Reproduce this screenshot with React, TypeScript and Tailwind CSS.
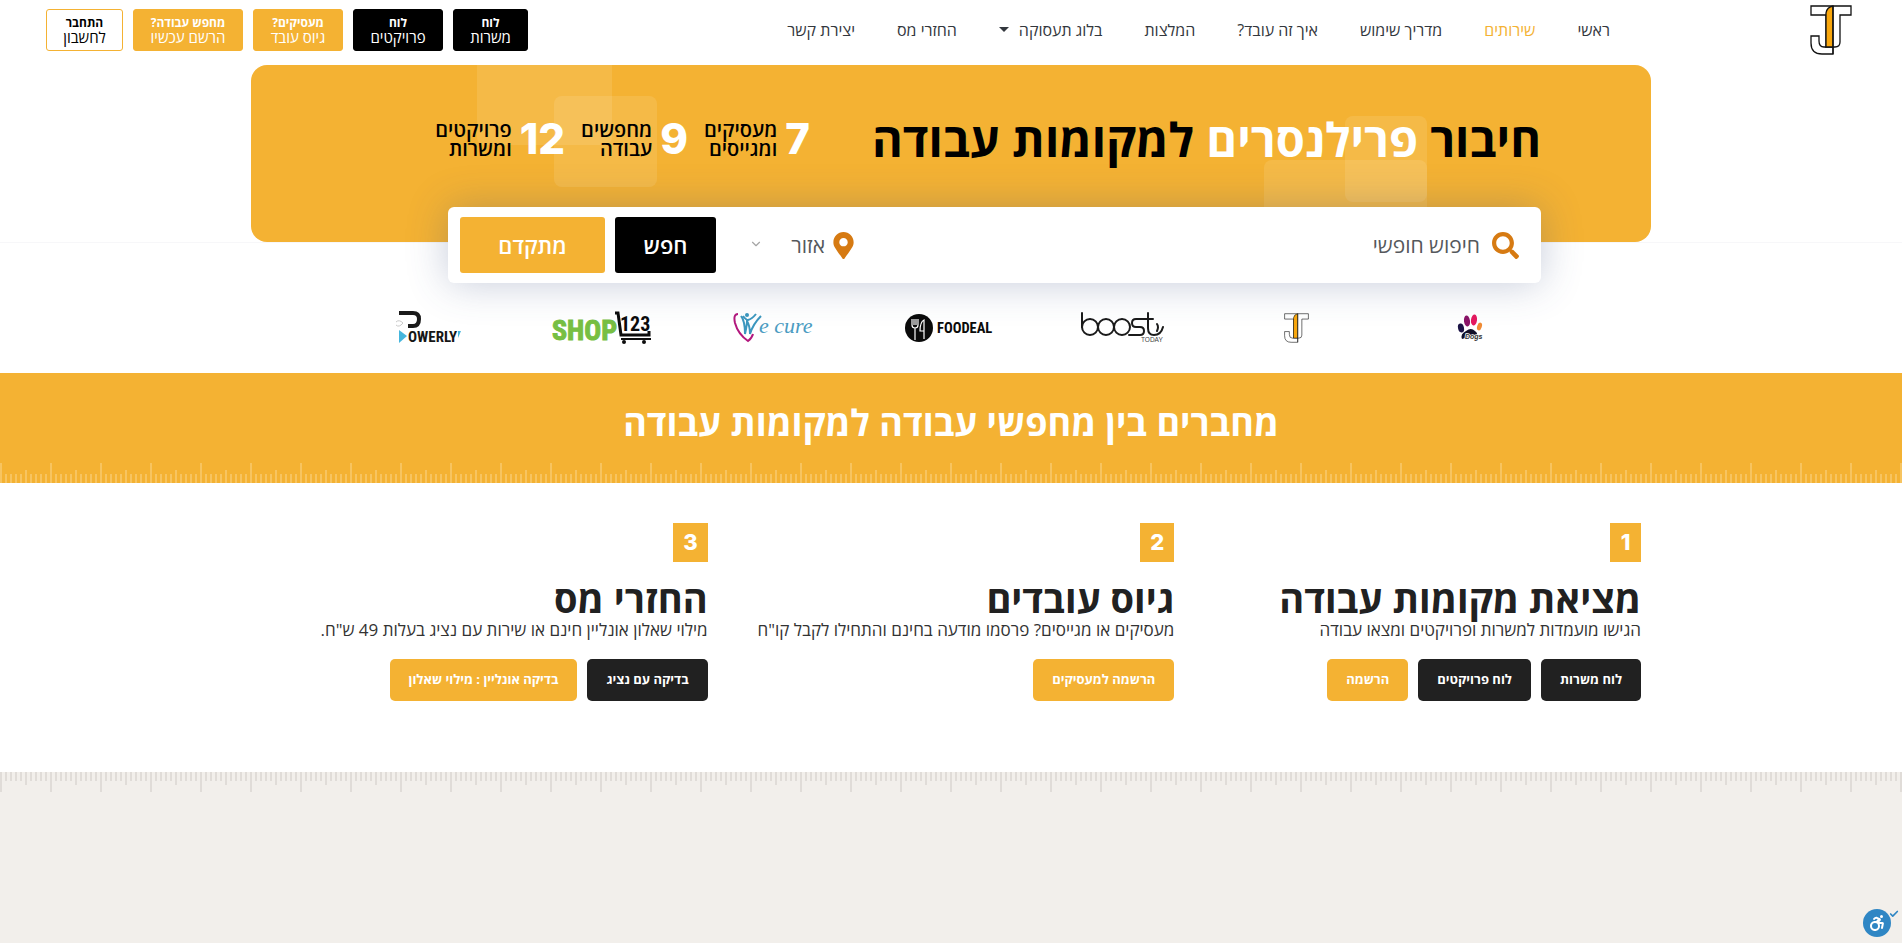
import React from 'react';
import { FaMapMarkerAlt, FaSearch } from 'react-icons/fa';
import { FaWheelchairMove } from 'react-icons/fa6';
import { Check, ChevronDown } from 'lucide-react';

interface NavItem {
  label: string;
  active?: boolean;
  hasMenu?: boolean;
}

interface Action {
  label: string;
  className: string;
}

const navItems: NavItem[] = [
  { label: 'ראשי' },
  { label: 'שירותים', active: true },
  { label: 'מדריך שימוש' },
  { label: 'איך זה עובד?' },
  { label: 'המלצות' },
  { label: 'בלוג תעסוקה', hasMenu: true },
  { label: 'החזרי מס' },
  { label: 'יצירת קשר' },
];

const headerButtons = [
  { top: 'לוח', bottom: 'משרות', className: 'w-[75px] bg-black border-black text-white' },
  { top: 'לוח', bottom: 'פרויקטים', className: 'w-[90px] bg-black border-black text-white' },
  { top: 'מעסיקים?', bottom: 'גיוס עובד', className: 'w-[90px] bg-[#f4b233] border-[#f4b233] text-white' },
  { top: 'מחפש עבודה?', bottom: 'הרשם עכשיו', className: 'w-[110px] bg-[#f4b233] border-[#f4b233] text-white' },
  { top: 'התחבר', bottom: 'לחשבון', className: 'w-[77px] bg-white border-[#f4b233] text-black' },
];

const stats = [
  { value: 7, first: 'מעסיקים', second: 'ומגייסים' },
  { value: 9, first: 'מחפשים', second: 'עבודה' },
  { value: 12, first: 'פרויקטים', second: 'ומשרות' },
];

const dark = 'bg-[#212121]';
const gold = 'bg-[#f4b233]';

const services: { title: string; text: string; actions: Action[] }[] = [
  {
    title: 'מציאת מקומות עבודה',
    text: 'הגישו מועמדות למשרות ופרויקטים ומצאו עבודה',
    actions: [
      { label: 'לוח משרות', className: dark },
      { label: 'לוח פרויקטים', className: dark },
      { label: 'הרשמה', className: gold },
    ],
  },
  {
    title: 'גיוס עובדים',
    text: 'מעסיקים או מגייסים? פרסמו מודעה בחינם והתחילו לקבל קו"ח',
    actions: [{ label: 'הרשמה למעסיקים', className: gold }],
  },
  {
    title: 'החזרי מס',
    text: 'מילוי שאלון אונליין חינם או שירות עם נציג בעלות 49 ש"ח.',
    actions: [
      { label: 'בדיקה עם נציג', className: dark },
      { label: 'בדיקה אונליין : מילוי שאלון', className: gold },
    ],
  },
];

function JTLogo({ className, thin }: { className: string; thin?: boolean }) {
  return (
    <svg viewBox="0 0 42 50" className={className} fill="none" stroke="#111" strokeWidth={thin ? 1 : 1.3}>
      <path d="M1 1H41V10H30V37Q30 42 25 42H16V10H1Z" fill="#fff" />
      <path d="M16 42H14Q9 42 9 36V31H1V38Q1 49 12 49H23V42" />
      <path d="M16 42V8Q17 2 23 1V42Z" fill="#f9a70d" />
      <path d="M23 1V49" />
    </svg>
  );
}

function Ruler({ id, color, flip }: { id: string; color: string; flip?: boolean }) {
  const minor = [6, 11, 16, 21, 31, 36, 41, 46];
  const tick = (x: number, h: number) => (
    <rect key={x} x={x - 1} y={flip ? 0 : 20 - h} width="2" height={h} fill={color} />
  );
  return (
    <svg className="block w-full h-5" aria-hidden="true">
      <defs>
        <pattern id={id} width="50" height="20" patternUnits="userSpaceOnUse">
          {tick(1, 20)}
          {tick(26, 13)}
          {minor.map((x) => tick(x, 9))}
        </pattern>
      </defs>
      <rect width="100%" height="20" fill={`url(#${id})`} />
    </svg>
  );
}

function DogsLogo() {
  return (
    <svg viewBox="0 0 26 28" className="w-[26px] h-7">
      <ellipse cx="4" cy="14" rx="3" ry="4.5" transform="rotate(-12 4 14)" fill="#1c1446" />
      <ellipse cx="10" cy="7" rx="3" ry="5.5" transform="rotate(-8 10 7)" fill="#8a1467" />
      <ellipse cx="17" cy="6" rx="3" ry="5.5" transform="rotate(8 17 6)" fill="#e5195f" />
      <ellipse cx="22.5" cy="12.5" rx="2.3" ry="4" transform="rotate(18 22.5 12.5)" fill="#f08b35" />
      <path d="M5 25Q3 20 9 17Q14 13 18 17Q22 20 19 24Q12 22 5 25Z" fill="#111029" />
      <text x="8" y="25" fontSize="7" fontWeight="700" fontStyle="italic" fill="#333" stroke="#fff" strokeWidth="1.5" paintOrder="stroke" className="font-['Liberation_Sans',sans-serif]">Dogs</text>
    </svg>
  );
}

function BoostLogo() {
  return (
    <svg viewBox="0 0 83 32" className="w-[83px] h-8" fill="none" stroke="#1b1b1b" strokeWidth="2" strokeLinecap="round">
      <path d="M1 1V15" />
      <circle cx="9" cy="15" r="8" />
      <circle cx="25" cy="15" r="8" />
      <circle cx="41" cy="15" r="8" />
      <path d="M63 7H55Q51 7 51 11Q51 15 55 15H59Q63 15 63 19Q63 23 59 23H48" />
      <path d="M67 1V16Q67 23 73 23Q80 23 82 15M63 7H72M76 12Q78 15 76 19" />
      <text x="60" y="30" fontSize="6.5" fill="#444" stroke="none" className="font-['Liberation_Sans',sans-serif]">TODAY</text>
    </svg>
  );
}

function FoodealLogo() {
  return (
    <svg viewBox="0 0 88 30" className="w-[88px] h-[30px]">
      <circle cx="14" cy="15" r="14" fill="#0b0b0b" />
      <path d="M7 6V12Q7 15 10 15Q13 15 13 12V6M9 6V12M11 6V12M10 15V27" stroke="#fff" strokeWidth="1.2" fill="none" />
      <path d="M19 26V7Q15 9 15 18H19" stroke="#fff" strokeWidth="1.2" fill="none" />
      <text x="32" y="20" fontSize="14.5" fontWeight="700" fill="#0b0b0b" className="font-['Liberation_Sans_Narrow','Roboto_Condensed','Liberation_Sans',sans-serif]">FOODEAL</text>
    </svg>
  );
}

function WeCureLogo() {
  return (
    <svg viewBox="0 0 84 32" className="w-[84px] h-8" fill="none">
      <path d="M5 2Q0 2 2 11Q5 22 15 29Q19 26 20 22" stroke="#b3177d" strokeWidth="2" />
      <circle cx="14" cy="3" r="2" fill="#3c97bf" />
      <path d="M8 4Q12 9 12 22Q14 13 14 9Q17 14 17 22Q20 12 28 4M10 4Q13 8 15 8Q19 7 23 2" stroke="#3c97bf" strokeWidth="2" />
      <text x="26" y="21" fontSize="22" fontStyle="italic" fill="#4b9cc2" className="font-['Liberation_Serif',serif]">e cure</text>
    </svg>
  );
}

function ShopLogo() {
  return (
    <svg viewBox="0 0 100 36" className="w-[100px] h-9">
      <text x="0" y="30" fontSize="28" fontWeight="700" fill="#77bf43" stroke="#77bf43" className="font-['Liberation_Sans_Narrow','Roboto_Condensed','Liberation_Sans',sans-serif]">SHOP</text>
      <g fill="none" stroke="#0c0c0c" strokeWidth="3">
        <path d="M63 3H66L69 25H97V21" />
        <path d="M69 29H99" strokeWidth="2" />
      </g>
      <text x="68" y="21" fontSize="20" fontWeight="700" fill="#0c0c0c" className="font-['Liberation_Sans_Narrow','Roboto_Condensed','Liberation_Sans',sans-serif]">123</text>
      <circle cx="72" cy="32" r="2" fill="#0c0c0c" />
      <circle cx="92" cy="32" r="2" fill="#0c0c0c" />
    </svg>
  );
}

function PowerlyLogo() {
  return (
    <svg viewBox="0 0 66 38" className="w-[66px] h-[38px]">
      <path d="M4 4H18Q24 4 24 10Q24 17 18 17H13" fill="none" stroke="#1a1a1a" strokeWidth="4" />
      <path d="M1 13Q4 10 8 14Q4 19 1 16" fill="none" stroke="#c9c9c9" />
      <path d="M4 21L12 27L4 34Z" fill="#45b6dd" />
      <text x="13" y="33" fontSize="15" fontWeight="700" fill="#161616" className="font-['Liberation_Sans_Narrow','Roboto_Condensed','Liberation_Sans',sans-serif]">OWERLY</text>
      <path d="M63 22L66 22L63 29Z" fill="#45b6dd" />
    </svg>
  );
}

function Header() {
  return (
    <header className="flex items-center h-[65px] pr-[50px] pl-[46px]">
      <a href="#" aria-label="JT" className="mb-1.5">
        <JTLogo className="w-[42px] h-[50px]" />
      </a>
      <nav className="flex ms-[179px] mb-1.5">
        {navItems.map((item) => (
          <a
            key={item.label}
            href="#"
            className={`flex items-center gap-2.5 px-[21px] text-base whitespace-nowrap ${item.active ? 'text-[#f4b233]' : 'text-[#33373d]'}`}
          >
            {item.label}
            {item.hasMenu && <span className="border-x-5 border-t-5 border-x-transparent border-t-[#33373d]" />}
          </a>
        ))}
      </nav>
      <div className="flex gap-2.5 ms-auto mb-1.5">
        {headerButtons.map((button) => (
          <button
            key={button.bottom}
            className={`flex flex-col items-center justify-center h-[42px] rounded-[3px] border whitespace-nowrap ${button.className}`}
          >
            <span className="text-xs leading-[14px] font-bold">{button.top}</span>
            <span className="text-[15px] leading-[14px]">{button.bottom}</span>
          </button>
        ))}
      </div>
    </header>
  );
}

function Hero() {
  return (
    <div className="border-b border-[#f7f7f9]">
      <section className="relative overflow-hidden w-full max-w-[1400px] mx-auto rounded-2xl bg-[#f4b233] pt-[46px] pb-[75px] px-[110px]">
        <div className="absolute top-0 left-[226px] w-[135px] h-20 rounded-b-lg bg-white/10" />
        <div className="absolute top-[31px] left-[303px] w-[103px] h-[91px] rounded-lg bg-white/10" />
        <div className="absolute top-[51px] right-[224px] w-[82px] h-[86px] rounded-lg bg-white/10" />
        <div className="absolute top-[95px] right-[224px] w-[163px] h-[82px] rounded-lg bg-white/10" />
        <div className="relative flex items-center gap-[62px] h-14">
          <h1 className="text-[47px] font-bold text-black whitespace-nowrap">
            חיבור <span className="text-white">פרילנסרים</span> למקומות עבודה
          </h1>
          <div className="flex gap-4">
            {stats.map((stat) => (
              <div key={stat.value} className="flex items-center gap-2 whitespace-nowrap">
                <span className="font-['Inter',sans-serif] text-[42px] leading-[42px] font-extrabold text-white">{stat.value}</span>
                <p className="text-xl leading-[19px] font-semibold text-black">
                  {stat.first}
                  <br />
                  {stat.second}
                </p>
              </div>
            ))}
          </div>
        </div>
      </section>
    </div>
  );
}

function SearchBar() {
  return (
    <div className="relative z-10 w-full max-w-[1400px] mx-auto -mt-9 pr-[110px] pl-[197px]">
      <form className="flex items-center h-[76px] rounded-md bg-white pr-[22px] pl-3 shadow-[0_0_40px_rgba(60,80,130,0.3)]">
        <label htmlFor="search" className="text-[#d67a12]">
          <FaSearch className="size-[27px]" />
        </label>
        <input
          id="search"
          type="text"
          placeholder="חיפוש חופשי"
          className="flex-1 min-w-0 ms-3 text-[21px] leading-7 font-medium outline-none placeholder:text-[#55585c]"
        />
        <label htmlFor="area" className="text-[#d67a12]">
          <FaMapMarkerAlt className="w-[21px] h-[27px]" />
        </label>
        <div className="relative ms-2 w-[76px]">
          <select id="area" className="w-full appearance-none text-[21px] leading-7 font-medium text-[#55585c] outline-none">
            <option>אזור</option>
          </select>
          <ChevronDown className="absolute left-0 top-1.5 size-3.5 text-[#a5a5a5] pointer-events-none" />
        </div>
        <button type="button" className="ms-[33px] w-[101px] h-14 rounded-[3px] bg-black text-[22px] font-semibold text-white">
          חפש
        </button>
        <button type="button" className="ms-2.5 w-[145px] h-14 rounded-[3px] bg-[#f4b233] text-[22px] font-semibold text-white">
          מתקדם
        </button>
      </form>
    </div>
  );
}

function Partners() {
  return (
    <div className="w-full max-w-[1220px] mx-auto">
      <div dir="ltr" className="grid grid-cols-7 items-center justify-items-center h-[90px] pr-1">
        <PowerlyLogo />
        <ShopLogo />
        <WeCureLogo />
        <FoodealLogo />
        <BoostLogo />
        <JTLogo className="w-[25px] h-[30px]" thin />
        <DogsLogo />
      </div>
    </div>
  );
}

function Services() {
  return (
    <section className="grid grid-cols-3 w-full max-w-[1400px] mx-auto pt-10 pb-[71px]">
      {services.map((service, index) => (
        <div key={service.title} className="px-2.5 whitespace-nowrap">
          <span className="inline-flex justify-center min-w-[31px] px-2.5 h-[39px] leading-[38px] bg-[#f4b233] font-['Inter',sans-serif] text-[22px] font-extrabold text-white">
            {index + 1}
          </span>
          <h3 className="mt-[15px] text-[38px] leading-[42px] font-bold text-[#212121]">{service.title}</h3>
          <p className="text-[17px] leading-[22px] text-[#333]">{service.text}</p>
          <div className="flex gap-2.5 mt-[18px]">
            {service.actions.map((action) => (
              <button
                key={action.label}
                className={`h-[42px] px-[19px] rounded-[5px] text-[13px] font-bold text-white ${action.className}`}
              >
                {action.label}
              </button>
            ))}
          </div>
        </div>
      ))}
    </section>
  );
}

export default function App() {
  return (
    <div dir="rtl" className="flex flex-col min-h-screen overflow-x-hidden bg-white font-['Open_Sans','Liberation_Sans',sans-serif]">
      <Header />
      <Hero />
      <SearchBar />
      <Partners />
      <section className="bg-[#f4b233]">
        <h2 className="h-[90px] text-center text-4xl leading-[100px] font-bold text-white">
          מחברים בין מחפשי עבודה למקומות עבודה
        </h2>
        <Ruler id="ruler-gold" color="#f7c460" />
      </section>
      <Services />
      <section className="flex-1 min-h-40 bg-[#f2efeb]">
        <Ruler id="ruler-gray" color="#e0dcd8" flip />
      </section>
      <button aria-label="נגישות" className="fixed right-[11px] bottom-1.5 flex items-center justify-center size-7 rounded-full bg-[#2f86c4] text-white">
        <FaWheelchairMove className="size-4" />
        <Check className="absolute -right-2 top-0 size-2.5 text-[#2f86c4]" strokeWidth={4} />
      </button>
    </div>
  );
}
